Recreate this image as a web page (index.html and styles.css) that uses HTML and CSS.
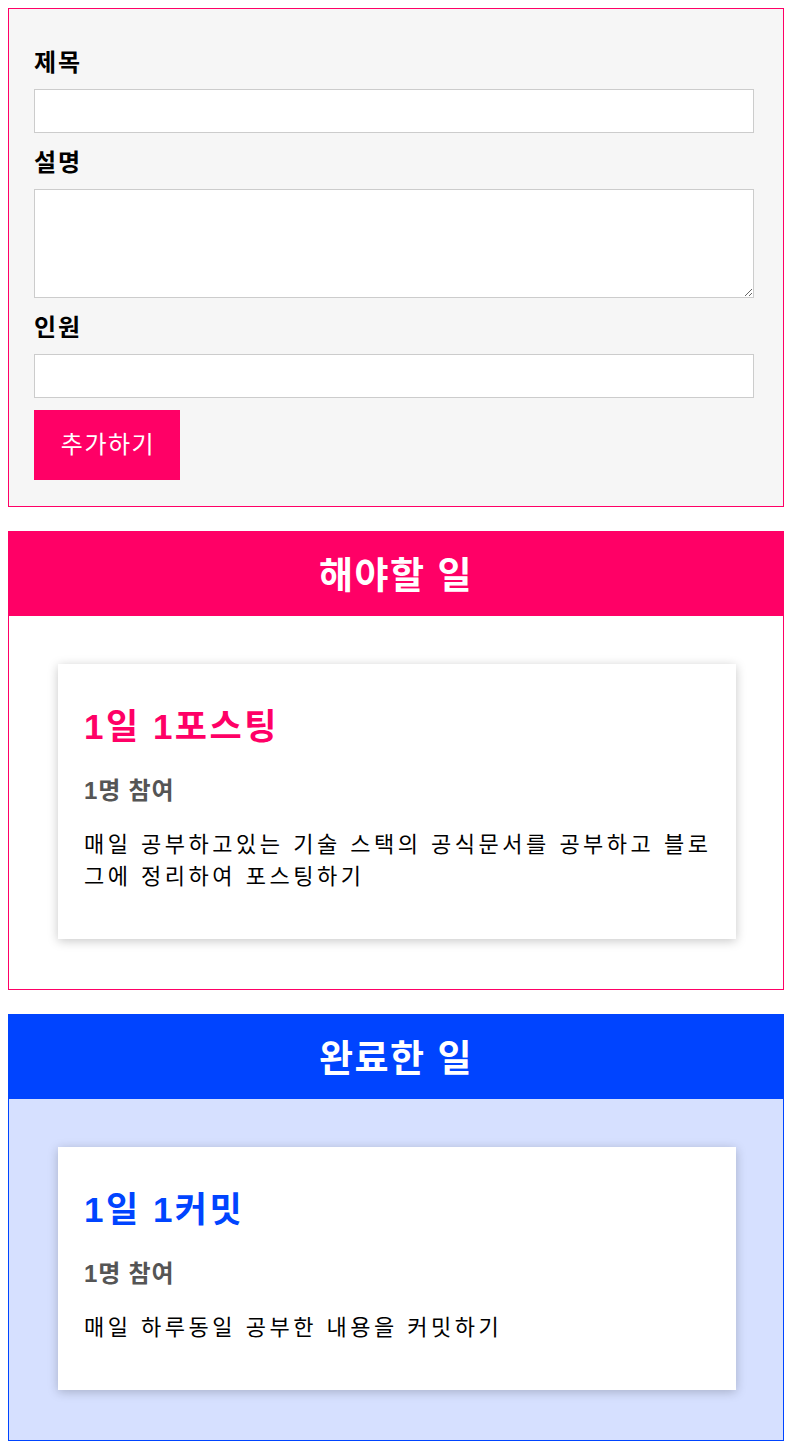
FILE: index.html
```html
<!DOCTYPE html>
<html lang="ko">
<head>
<meta charset="utf-8">
<title>할 일</title>
<link rel="stylesheet" href="styles.css">
</head>
<body>
  <form class="add-form">
    <label class="field-label" for="title">제목</label>
    <input class="field-input" id="title" type="text">
    <label class="field-label" for="desc">설명</label>
    <textarea class="field-area" id="desc"></textarea>
    <label class="field-label" for="people">인원</label>
    <input class="field-input" id="people" type="text">
    <button class="add-button" type="button">추가하기</button>
  </form>

  <section class="board board-todo">
    <h2 class="board-title">해야할 일</h2>
    <div class="board-body">
      <article class="task-card">
        <h3 class="task-title">1일 1포스팅</h3>
        <h4 class="task-people">1명 참여</h4>
        <p class="task-desc">매일 공부하고있는 기술 스택의 공식문서를 공부하고 블로그에 정리하여 포스팅하기</p>
      </article>
    </div>
  </section>

  <section class="board board-done">
    <h2 class="board-title">완료한 일</h2>
    <div class="board-body">
      <article class="task-card">
        <h3 class="task-title">1일 1커밋</h3>
        <h4 class="task-people">1명 참여</h4>
        <p class="task-desc">매일 하루동일 공부한 내용을 커밋하기</p>
      </article>
    </div>
  </section>
</body>
</html>
```

FILE: styles.css
```css
body {
  margin: 8px;
  width: 776px;
  font-family: "Liberation Sans", "Noto Sans CJK KR", sans-serif;
  color: #000;
  background: #fff;
}

.add-form {
  display: flex;
  flex-direction: column;
  align-items: flex-start;
  border: 1px solid #ff0066;
  background: #f6f6f6;
  padding: 36px 29px 26px 25px;
}

.field-label {
  display: block;
  font-size: 24px;
  font-weight: bold;
  line-height: 30px;
  letter-spacing: 2px;
  padding-top: 3px;
  margin-bottom: 11px;
}

.field-input,
.field-area {
  box-sizing: border-box;
  width: 100%;
  border: 1px solid #cccccc;
  background: #fff;
  margin: 0 0 12px;
  padding: 0 8px;
  font-family: inherit;
  font-size: 18px;
}

.field-input {
  height: 44px;
}

.field-area {
  height: 109px;
}

.add-button {
  width: 146px;
  height: 70px;
  padding: 0 0 0 2px;
  border: none;
  background: #ff0066;
  color: #fff;
  font-family: inherit;
  font-size: 24px;
  line-height: 30px;
  letter-spacing: 1.5px;
  text-align: center;
}

.board {
  margin-top: 24px;
  border: 1px solid #ff0066;
}

.board-title {
  margin: 0;
  height: 78px;
  padding-top: 6px;
  line-height: 78px;
  text-align: center;
  color: #fff;
  font-size: 37px;
  font-weight: bold;
  letter-spacing: 1.5px;
}

.board-body {
  padding: 48px 47px 50px 49px;
}

.board-todo .board-title {
  background: #ff0066;
}

.board-done {
  border-color: #0044ff;
}

.board-done .board-title {
  background: #0044ff;
}

.board-done .board-body {
  background: #d6e0ff;
}

.task-card {
  background: #fff;
  padding: 45px 14px 46px 26px;
  box-shadow: 0 2px 10px rgba(0, 0, 0, 0.22);
}

.task-title {
  margin: 0 0 31px;
  font-size: 35px;
  line-height: 36px;
  font-weight: bold;
  letter-spacing: 2.5px;
  color: #ff0066;
}

.board-done .task-title {
  color: #0044ff;
}

.task-people {
  margin: 0 0 23px;
  font-size: 24px;
  line-height: 30px;
  font-weight: bold;
  letter-spacing: 0.8px;
  color: #555555;
}

.task-desc {
  margin: 0;
  font-size: 22px;
  line-height: 32px;
  letter-spacing: 3.5px;
}
```
